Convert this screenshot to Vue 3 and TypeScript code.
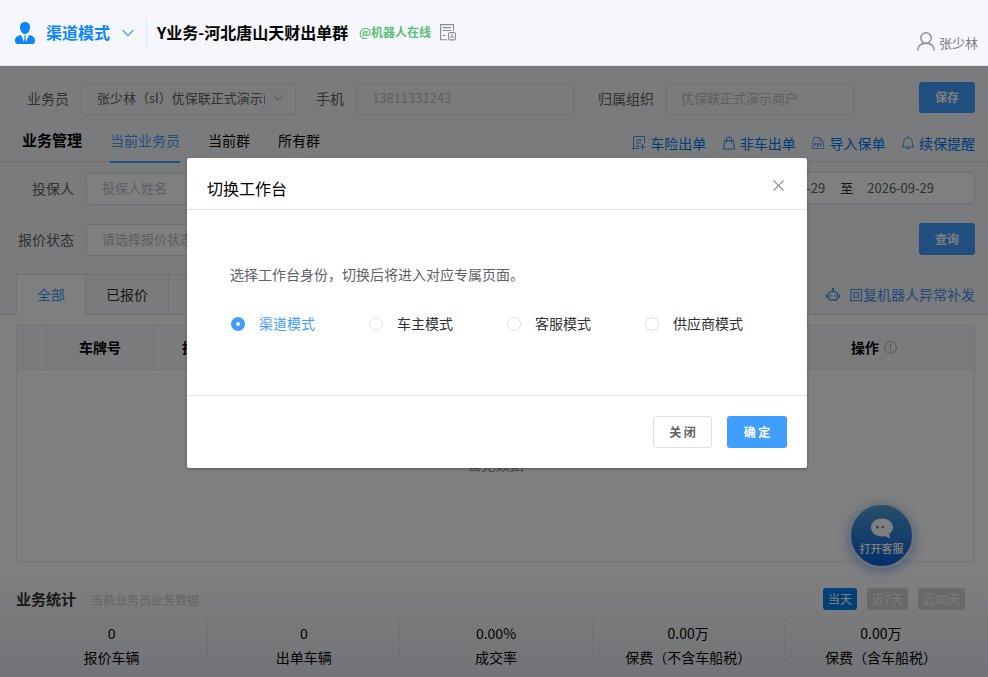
<script setup lang="ts">
import { ref } from 'vue'

interface Stat {
  value: string
  label: string
}

const modes: string[] = ['渠道模式', '车主模式', '客服模式', '供应商模式']
const mode = ref<string>('渠道模式')
const scopes: string[] = ['当前业务员', '当前群', '所有群']
const scope = ref<string>('当前业务员')
const ranges: string[] = ['当天', '近7天', '近30天']
const range = ref<string>('当天')
const dialogOpen = ref<boolean>(true)

const stats: Stat[] = [
  { value: '0', label: '报价车辆' },
  { value: '0', label: '出单车辆' },
  { value: '0.00%', label: '成交率' },
  { value: '0.00万', label: '保费（不含车船税）' },
  { value: '0.00万', label: '保费（含车船税）' },
]
</script>

<template>
  <div class="app">
    <header class="topbar">
      <svg class="agent" width="20" height="22" viewBox="0 0 20 22">
        <path fill="#0d85ff" d="M10 0c3.2 0 5 2.200 5 5.200 0 3.300-2.200 6.800-5 6.800s-5-3.500-5-6.800C5 2.200 6.800 0 10 0z" />
        <path fill="#0d85ff" d="M6 13l3 7 .600-5-.8-1.400h2.400L10.400 15l.6 5 3-7c3.800.7 6 2.400 6 5.500 0 2.200-.8 3.500-2.500 3.500h-15C.8 22 0 20.700 0 18.500 0 15.400 2.200 13.700 6 13z" />
      </svg>
      <span class="mode">{{ mode }}</span>
      <svg class="mode-arrow" width="12" height="8" viewBox="0 0 12 8"><path d="M.5 1l5.500 5.600L11.500 1" fill="none" stroke="#3a9bff" stroke-width="1.100" /></svg>
      <i class="split"></i>
      <b class="group">Y业务-河北唐山天财出单群</b>
      <span class="online">@机器人在线</span>
      <svg class="doc" width="16" height="17" viewBox="0 0 16 17" fill="none" stroke="#8b8d91" stroke-width="1.100">
        <path d="M13.500 7V.6H.6v15.200H7M2.500 3.600h8.500M2.500 6.500h8.500M2.500 11.500h3" />
        <rect x="8.500" y="8.600" width="6.900" height="7.300" rx="1.500" />
        <path d="M10.300 14.200l1.200-3.500h.8l1.200 3.500M10.800 13h2.200" stroke-width=".8" />
      </svg>
      <div class="user">
        <svg width="18" height="19" viewBox="0 0 18 19" fill="none" stroke="#8f9296" stroke-width="1.500">
          <circle cx="9" cy="6" r="5.200" /><path d="M.8 18.600c.2-4.500 3-7.400 8.200-7.400s8 2.900 8.200 7.400" />
        </svg>
        <span>张少林</span>
      </div>
    </header>

    <main>
      <section class="profile">
        <label class="l-agent">业务员</label>
        <div class="field agent-field"><span class="clip">张少林（sl）优保联正式演示商户</span>
          <svg width="12" height="8" viewBox="0 0 12 8"><path d="M1 1l5 5.200L11 1" fill="none" stroke="#c0c4cc" stroke-width="1.100" /></svg>
        </div>
        <label class="l-phone">手机</label>
        <div class="field disabled phone-field">13811331243</div>
        <label class="l-org">归属组织</label>
        <div class="field disabled org-field">优保联正式演示商户</div>
        <button class="primary save">保存</button>
      </section>

      <nav class="scopes">
        <b>业务管理</b>
        <a v-for="s in scopes" :key="s" :class="{ on: s === scope }" @click="scope = s">{{ s }}</a>
        <div class="links">
          <span>
            <svg width="14" height="14" viewBox="0 0 14 14" fill="none" stroke="#4a90f0"><path d="M12.500 7V.5H3A1.500 1.500 0 0 0 1.500 2v10.500H7M0 12.500h2M4 4h6M4 7h5M4 10h3M10.500 8v6M7.500 11h6" /></svg>车险出单
          </span>
          <span>
            <svg width="14" height="14" viewBox="0 0 14 14" fill="none" stroke="#3385f0"><path d="M2.500 4.500h9l1 8.500h-11zM4.500 7V3.500a2.500 2.500 0 0 1 5 0V7" /></svg>非车出单
          </span>
          <span>
            <svg width="14" height="14" viewBox="0 0 14 14" fill="none" stroke="#4a90f0" stroke-width=".8"><path d="M2.500 5.500V1.500h6l3 3v2M8.500 1.500v3h3M1.500 5.500v7h11v-6" /><path d="M3.500 10.500v-3.500h1.500v1.800H3.500M6.300 7v3.500h.7l.8-.8V7.700L7 7zM9.500 10.500V7h1.700M9.500 8.700h1.500" /></svg>导入保单
          </span>
          <span>
            <svg width="14" height="14" viewBox="0 0 14 14" fill="none" stroke="#4a90f0"><path d="M7 0v1.500M1 11c1.300-1.200 1.700-2.300 1.700-4.500C2.700 3.500 4.500 1.500 7 1.500s4.300 2 4.300 5c0 2.200.4 3.300 1.700 4.500zM5.300 12.500h3.400" /></svg>续保提醒
          </span>
        </div>
      </nav>

      <section class="filters">
        <div class="frow">
          <label>投保人</label>
          <div class="field hint">投保人姓名</div>
          <div class="field dates"><span>2026-09-29</span><i>至</i><span>2026-09-29</span></div>
        </div>
        <div class="frow second">
          <label>报价状态</label>
          <div class="field hint">请选择报价状态</div>
          <button class="primary">查询</button>
        </div>
      </section>

      <section class="status">
        <i class="lead"></i>
        <a class="on">全部</a><a>已报价</a><a></a>
        <div class="robot">
          <svg width="14" height="13" viewBox="0 0 14 13" fill="none" stroke="#4a8ff5" stroke-width="1.300">
            <rect x="2.600" y="3.900" width="8.800" height="8.100" rx="2" /><path d="M7 1v3M.7 6v4M13.300 6v4M5.300 7v1.500M8.700 7v1.500" /><circle cx="7" cy="1.300" r=".7" />
          </svg>回复机器人异常补发
        </div>
      </section>

      <section class="table">
        <div class="thead">
          <div class="c0"></div><div class="c1">车牌号</div><div class="c2">投保人</div>
          <div class="c3">操作
            <svg width="13" height="13" viewBox="0 0 13 13" fill="none" stroke="#a9acb2"><circle cx="6.500" cy="6.500" r="5.900" /><path d="M6.500 3v4.500M6.500 8.800V10" /></svg>
          </div>
        </div>
        <div class="empty">暂无数据</div>
      </section>

      <section class="summary">
        <div class="shead">
          <b>业务统计</b><span>当前业务员业务数据</span>
          <div class="ranges"><a v-for="r in ranges" :key="r" :class="{ on: r === range }" @click="range = r">{{ r }}</a></div>
        </div>
        <div class="stats">
          <div v-for="s in stats" :key="s.label" class="stat"><span>{{ s.value }}</span><span>{{ s.label }}</span></div>
        </div>
      </section>
    </main>

    <div class="service">
      <svg width="24" height="21" viewBox="0 0 24 21">
        <path fill="#fff" d="M12 .5c6.200 0 11 3.900 11 9 0 2.600-1.500 4.700-3.800 6.300l1 4.700-5.200-2.400c-1 .3-2 .4-3 .4-6.200 0-11-3.900-11-9s4.800-9 11-9z" />
        <circle cx="7.400" cy="9.300" r="1.300" fill="#3d86cc" /><circle cx="12.800" cy="9.300" r="1.300" fill="#3d86cc" />
      </svg>
      <span>打开客服</span>
    </div>

    <div v-if="dialogOpen" class="mask">
      <div class="dialog">
        <div class="dhead">
          <span>切换工作台</span>
          <svg width="11" height="11" viewBox="0 0 11 11" @click="dialogOpen = false"><path d="M.5.500l10 10M10.500.5l-10 10" stroke="#909399" stroke-width="1.100" /></svg>
        </div>
        <div class="dbody">
          <p>选择工作台身份，切换后将进入对应专属页面。</p>
          <div class="radios">
            <div v-for="m in modes" :key="m" class="radio" :class="{ on: m === mode }" @click="mode = m"><i></i><span>{{ m }}</span></div>
          </div>
        </div>
        <div class="dfoot">
          <button class="plain" @click="dialogOpen = false">关 闭</button>
          <button class="primary ok" @click="dialogOpen = false">确 定</button>
        </div>
      </div>
    </div>
  </div>
</template>

<style>
body { margin: 0; overflow: hidden; }
</style>

<style scoped>
* { box-sizing: border-box; }
.app { position: relative; width: 988px; height: 677px; overflow: hidden; background: #fff; color: #000; font: 14px/20px "Noto Sans CJK SC", sans-serif; white-space: nowrap; }
svg { flex: none; display: block; }
i { font-style: normal; }
button { font: bold 12px/16px "Noto Sans CJK SC", sans-serif; padding: 0 0 1px; border: 0; border-radius: 3px; }
.primary { width: 56px; height: 32px; background: #409eff; color: #fff; }

.topbar { display: flex; align-items: center; height: 66px; padding: 0 10px 0 15px; background: #f5f7fc; border-bottom: 1px solid #e4e7ed; }
.mode { margin: -2px 0 0 11px; font-size: 16px; font-weight: bold; color: #0d85ff; }
.mode-arrow { margin-left: 12px; }
.split { width: 1px; height: 32px; margin: 0 10px 0 12px; background: #dcebf5; }
.group { width: 192px; margin-top: -2px; font-size: 16px; }
.online { margin: -2px 0 0 10px; font-size: 12px; font-weight: bold; color: #5bc075; }
.doc { margin: -1px 0 0 9px; }
.user { display: flex; align-items: center; gap: 4px; margin: 21px 0 0 auto; font-size: 13px; color: #7b7e84; }
.user svg { margin-top: -3px; }

main { background: #f5f7fa; }
label { margin-top: -2px; color: #606266; text-align: right; }
.field { display: flex; align-items: center; height: 32px; padding: 0 15px 1px; border: 1px solid #dcdfe6; border-radius: 4px; background: #fff; color: #606266; font-size: 13px; }
.profile { display: flex; align-items: center; height: 64px; padding: 2px 13px 0 27px; }
.profile .field { background: transparent; padding-bottom: 2px; }
.profile .disabled { color: #b9bcc4; border-color: #e0e3e9; }
.l-agent { width: 42px; margin-right: 12px; }
.profile .agent-field { width: 215px; padding-right: 11px; }
.clip { width: 169px; overflow: hidden; margin-right: 7px; }
.l-phone { margin: -2px 12px 0 20px; }
.phone-field { width: 219px; }
.l-org { margin: -2px 11px 0 23px; }
.org-field { width: 190px; }
.save { height: 31px; margin: -3px 0 0 auto; }

.scopes { display: flex; height: 32px; padding: 0 13px 0 22px; border-bottom: 1px solid #dfe2e8; }
.scopes b { width: 60px; font-size: 15px; line-height: 20px; }
.scopes a { height: 33px; margin-left: 28px; line-height: 20px; }
.scopes .on { color: #409eff; border-bottom: 2px solid #409eff; }
.links { display: flex; gap: 15.600px; margin: 3px 0 0 auto; color: #0079ef; }
.links span { display: flex; align-items: center; height: 20px; gap: 4px; }

.filters { height: 112px; padding: 11px 13px 0 14px; }
.frow { display: flex; align-items: center; height: 32px; }
.frow label { width: 60px; margin: -3px 12px 0 0; }
.frow .hint { width: 219px; padding-bottom: 2px; color: #b9bcc4; }
.frow .dates { width: 260px; margin: -2px 0 0 auto; padding: 0 40px 0 0; justify-content: flex-end; }
.dates i { margin: 0 14px 0 15px; color: #303133; }
.frow.second { margin-top: 19px; }
.second .primary { margin: -2px 0 0 auto; }

.status { display: flex; height: 41px; }
.lead { width: 16px; border-bottom: 1px solid #dcdfe6; }
.status a { width: 83px; border: 1px solid #dcdfe6; border-left: 0; line-height: 38px; text-align: center; color: #303133; }
.status .on { width: 70px; background: #fff; color: #409eff; border: 1px solid #dcdfe6; border-bottom-color: #fff; }
.robot { display: flex; flex: 1; align-items: center; justify-content: flex-end; gap: 9px; padding-right: 13px; border-bottom: 1px solid #dcdfe6; color: #4a90f0; }

.table { height: 256px; padding: 10px 13px 9px 16px; background: #fff; }
.thead { display: flex; height: 45px; border: 1px solid #e6e9f0; background: #f5f7fa; font-weight: bold; line-height: 43px; text-align: center; }
.thead div { border-right: 1px solid #e6e9f0; }
.c0 { width: 30px; }
.c1 { width: 107px; }
.c2 { width: 99px; }
.thead .c3 { display: flex; align-items: center; justify-content: center; gap: 5px; width: 198px; margin-left: auto; padding-right: 2px; border: 0; }
.empty { height: 192px; border: 1px solid #e6e9f0; border-top: 0; line-height: 189px; text-align: center; color: #909399; }

.summary { height: 106px; padding: 17px 11px 0 16px; background: linear-gradient(#fff, #e5e8ef); }
.shead { display: flex; align-items: center; height: 22px; }
.shead b { font-size: 15px; color: #303133; }
.shead > span { margin: 1px 0 0 15px; font-size: 12px; color: #c7c9cd; }
.ranges { display: flex; gap: 10px; margin-left: auto; padding-right: 12px; }
.ranges a { height: 22px; padding: 0 5px; border-radius: 3px; background: #d3d3d4; color: #f7f7f7; font-size: 12px; line-height: 22px; }
.ranges .on { background: #0080f0; color: #fff; }
.stats { display: grid; grid-template-columns: repeat(5, 1fr); margin-top: 9px; }
.stat { display: flex; flex-direction: column; gap: 4px; height: 52px; padding-top: 4px; text-align: center; border-right: 1px dashed #d8dbe0; }
.stat:last-child { border: 0; }

.service { position: absolute; left: 849px; top: 503px; display: flex; flex-direction: column; align-items: center; width: 65px; height: 65px; padding-top: 13px; border: 2px solid #dfe3ea; border-radius: 50%; background: linear-gradient(#529fd5, #0860d8); box-shadow: 0 3px 12px rgba(30, 110, 240, .5); color: #fff; font-size: 11px; font-weight: 500; line-height: 18px; }

.mask { position: absolute; inset: 66px 0 0; background: rgba(0, 0, 0, .5); }
.dialog { position: absolute; left: 187px; top: 92px; width: 620px; height: 310px; border-radius: 2px; background: #fff; box-shadow: 0 1px 3px rgba(0, 0, 0, .3); }
.dhead { display: flex; align-items: center; justify-content: space-between; height: 52px; padding: 8px 23px 0 20px; border-bottom: 1px solid #e8e8e8; font-size: 16px; }
.dhead svg { margin-top: -4px; }
.dbody { height: 185px; padding: 54px 43px 0; }
.dbody p { margin: 0; color: #606266; }
.radios { display: flex; margin: 29px 0 0 1px; }
.radio { display: flex; flex: none; align-items: center; width: 138px; gap: 13px; color: #303133; }
.radio i { width: 14px; height: 14px; margin-top: 1px; border: 1px solid #dcdfe6; border-radius: 50%; background: #fff; }
.radio span { margin-left: 1px; }
.radio.on { color: #409eff; }
.radio.on i { border: 5px solid #409eff; }
.dfoot { display: flex; gap: 15px; justify-content: flex-end; height: 73px; padding: 20px 20px 0 0; border-top: 1px solid #e8e8e8; }
.plain { width: 59px; height: 32px; border: 1px solid #dcdfe6; background: #fff; color: #606266; }
.ok { width: 60px; }
</style>
